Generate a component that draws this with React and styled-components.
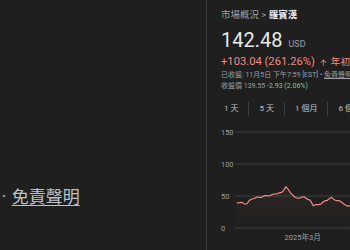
import React from 'react';
import styled, { createGlobalStyle } from 'styled-components';

const Global = createGlobalStyle`
  html, body { margin: 0; padding: 0; background: #1f1f1f; overflow: hidden; }
  body { font-family: Roboto, "Noto Sans CJK TC", sans-serif; }
`;

const Page = styled.div`
  display: flex;
  width: 350px;
  height: 250px;
  overflow: hidden;
  background: #1f1f1f;
`;

const LeftPane = styled.div`
  flex: 0 0 206px;
  box-sizing: border-box;
  padding-top: 185px;
  display: flex;
  flex-direction: column;
`;

const Footnote = styled.div`
  display: flex;
  align-items: center;
  padding-left: 2px;
  font-size: 17px;
  line-height: 24px;
  color: #bdc1c6;
`;

const Bullet = styled.span`
  font-size: 11px;
  color: #9aa0a6;
  margin-right: 6px;
`;

const FootLink = styled.a`
  color: #bdc1c6;
  text-decoration: underline;
  text-underline-offset: 2px;
  text-decoration-thickness: 1px;
`;

const RightPane = styled.div`
  flex: 0 0 auto;
  width: 330px;
  box-sizing: border-box;
  border-left: 1px solid #3c4043;
  padding: 8px 0 0 14px;
  display: flex;
  flex-direction: column;
  white-space: nowrap;
`;

const Crumbs = styled.div`
  font-size: 9.5px;
  line-height: 13px;
  color: #9aa0a6;
`;

const CrumbCurrent = styled.span`
  color: #e8eaed;
  font-weight: 700;
`;

const PriceRow = styled.div`
  display: flex;
  align-items: baseline;
  margin-top: 7px;
`;

const Price = styled.span`
  font-size: 20px;
  line-height: 24px;
  color: #e8eaed;
`;

const Currency = styled.span`
  font-size: 9px;
  color: #9aa0a6;
  margin-left: 6px;
`;

const Change = styled.div`
  display: flex;
  align-items: center;
  margin-top: 3px;
  font-size: 11.2px;
  line-height: 14px;
  color: #f28b82;
`;

const Period = styled.span`
  font-size: 9.6px;
`;

const Arrow = styled.svg`
  width: 9px;
  height: 9px;
  margin: 0 3px 0 4px;
  fill: #f28b82;
`;

const Meta = styled.div`
  font-size: 7px;
  line-height: 11px;
  color: #9aa0a6;
  margin-top: ${p => p.$gap || 0}px;
`;

const MetaLink = styled.span`
  text-decoration: underline;
`;

const Down = styled.span`
  color: #81c995;
`;

const Tabs = styled.div`
  display: flex;
  align-items: center;
  margin-top: 10px;
  height: 14px;
`;

const Tab = styled.div`
  font-size: 8px;
  line-height: 14px;
  color: #bdc1c6;
  padding: 0 10px;
  &:first-child { padding-left: 3px; }
`;

const Sep = styled.div`
  width: 1px;
  height: 14px;
  background: #3c4043;
`;

const Chart = styled.svg`
  display: block;
  margin-top: 3px;
  overflow: visible;
`;

const key = [
  [15.7, 84], [20.7, 83.3], [25.7, 85], [30.7, 80], [35.7, 78], [40.7, 78.3],
  [45.7, 76.7], [50.7, 75.7], [55.7, 75], [60.7, 73.3], [64.7, 67.7], [69, 73.3],
  [74, 78.3], [79, 79], [84, 78.3], [89, 81], [92.3, 86.7], [97.3, 85.7],
  [102.3, 82.7], [105.7, 81.7], [110.7, 78.3], [115.7, 81.7], [120.7, 83.3],
  [125.7, 86.7], [129, 86.7], [135, 85.5]
];

function buildPoints() {
  const pts = [];
  for (let i = 0; i < key.length - 1; i++) {
    const [x0, y0] = key[i];
    const [x1, y1] = key[i + 1];
    pts.push([x0, y0]);
    const mx = (x0 + x1) / 2;
    const my = (y0 + y1) / 2 + Math.sin(i * 2.3) * 0.9;
    pts.push([mx, my]);
  }
  pts.push(key[key.length - 1]);
  return pts;
}

const points = buildPoints();
const linePath = points.map((p, i) => `${i ? 'L' : 'M'}${p[0].toFixed(1)} ${p[1].toFixed(1)}`).join(' ');
const areaPath = `${linePath} L135 109 L15.7 109 Z`;

const grid = [
  { label: '150', y: 13 },
  { label: '100', y: 45 },
  { label: '50', y: 77 },
  { label: '0', y: 109 },
];

export default function App() {
  return (
    <>
      <Global />
      <Page>
        <LeftPane>
          <Footnote>
            <Bullet>•</Bullet>
            <FootLink>免責聲明</FootLink>
          </Footnote>
        </LeftPane>
        <RightPane>
          <Crumbs>
            市場概況 &gt; <CrumbCurrent>羅賓漢</CrumbCurrent>
          </Crumbs>
          <PriceRow>
            <Price>142.48</Price>
            <Currency>USD</Currency>
          </PriceRow>
          <Change>
            +103.04 (261.26%)
            <Arrow viewBox="0 0 24 24">
              <path d="M4 12l1.41 1.41L11 7.83V20h2V7.83l5.58 5.59L20 12l-8-8-8 8z" />
            </Arrow>
            <Period>年初至今</Period>
          </Change>
          <Meta $gap={1}>
            已收盤: 11月5日 下午7:59 [EST] • <MetaLink>免責聲明</MetaLink>
          </Meta>
          <Meta>
            收盤價 139.55 <Down>-2.93 (2.06%)</Down>
          </Meta>
          <Tabs>
            <Tab>1 天</Tab>
            <Sep />
            <Tab>5 天</Tab>
            <Sep />
            <Tab>1 個月</Tab>
            <Sep />
            <Tab>6 個月</Tab>
          </Tabs>
          <Chart width="200" height="130" viewBox="0 0 200 130">
            <defs>
              <linearGradient id="fill" x1="0" y1="0" x2="0" y2="1">
                <stop offset="0" stopColor="#f28b82" stopOpacity="0.07" />
                <stop offset="1" stopColor="#f28b82" stopOpacity="0" />
              </linearGradient>
            </defs>
            {grid.map(g => (
              <g key={g.label}>
                <line x1="14" x2="200" y1={g.y} y2={g.y} stroke="#3c4043" strokeWidth="1" />
                <text x="0" y={g.y + 2.7} fontSize="7.4" fill="#9aa0a6" fontFamily="Roboto, sans-serif">{g.label}</text>
              </g>
            ))}
            <path d={areaPath} fill="url(#fill)" />
            <path d={linePath} fill="none" stroke="#f28b82" strokeWidth="1.2" strokeLinejoin="round" />
            <text x="81.7" y="120.5" textAnchor="middle" fontSize="7.6" fill="#9aa0a6" fontFamily='Roboto, "Noto Sans CJK TC", sans-serif'>2025年3月</text>
          </Chart>
        </RightPane>
      </Page>
    </>
  );
}
